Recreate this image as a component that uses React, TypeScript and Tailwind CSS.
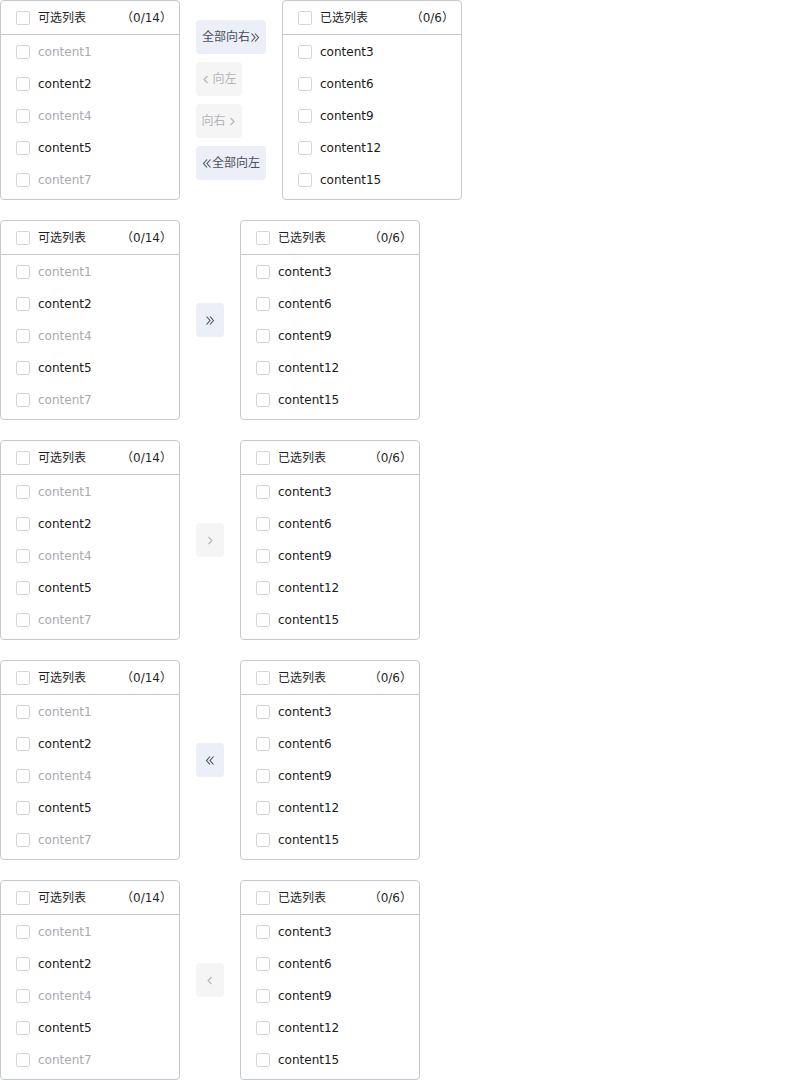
const font = { fontFamily: '"DejaVu Sans", "Noto Sans CJK SC", sans-serif' };

const leftItems = [
  { label: 'content1', disabled: true },
  { label: 'content2', disabled: false },
  { label: 'content4', disabled: true },
  { label: 'content5', disabled: false },
  { label: 'content7', disabled: true },
];

const rightItems = ['content3', 'content6', 'content9', 'content12', 'content15'];

function Box() {
  return <span className="w-[14px] h-[14px] shrink-0 rounded-[2px] border border-[#d4d6db] bg-white" />;
}

function Chevron({ dir, double }: { dir: 'left' | 'right'; double?: boolean }) {
  const flip = dir === 'left' ? 'scale(-1,1) translate(-10,0)' : undefined;
  return (
    <svg width="10" height="11" viewBox="0 0 10 11" fill="none" stroke="currentColor" strokeWidth="1.1">
      <g transform={flip}>
        {double ? (
          <>
            <path d="M1.5 1.5 L5 5.5 L1.5 9.5" />
            <path d="M5 1.5 L8.5 5.5 L5 9.5" />
          </>
        ) : (
          <path d="M3.5 2 L7 5.5 L3.5 9" />
        )}
      </g>
    </svg>
  );
}

function Panel({ title, count, children }: { title: string; count: string; children: React.ReactNode }) {
  return (
    <div className="w-[180px] h-[200px] shrink-0 rounded-[4px] border border-[#c6c8cd] bg-white overflow-hidden">
      <div className="h-[34px] flex items-center pl-[15px] pr-[7px] border-b border-[#c6c8cd] text-[12px] text-[#1f1f1f]">
        <Box />
        <span className="ml-2">{title}</span>
        <span className="ml-auto">{count}</span>
      </div>
      <div className="pt-px">{children}</div>
    </div>
  );
}

function Row({ label, disabled }: { label: string; disabled?: boolean }) {
  return (
    <div className="h-8 flex items-center px-[15px] text-[12px]">
      <Box />
      <span className={disabled ? 'ml-2 text-[#a9abb0]' : 'ml-2 text-[#1a1a1a]'}>{label}</span>
    </div>
  );
}

function LeftPanel() {
  return (
    <Panel title="可选列表" count="（0/14）">
      {leftItems.map((it) => (
        <Row key={it.label} label={it.label} disabled={it.disabled} />
      ))}
    </Panel>
  );
}

function RightPanel() {
  return (
    <Panel title="已选列表" count="（0/6）">
      {rightItems.map((l) => (
        <Row key={l} label={l} />
      ))}
    </Panel>
  );
}

const activeBtn = 'bg-[#eceff7] text-[#4a4f5c]';
const idleBtn = 'bg-[#f5f5f6] text-[#b3b5ba]';

export default function App() {
  return (
    <div className="w-[800px] min-h-[1080px] bg-white flex flex-col gap-5" style={font}>
      <div className="flex items-center">
        <LeftPanel />
        <div className="mx-4 w-[70px] flex flex-col gap-2">
          <button className={`h-[34px] w-[70px] rounded-[4px] flex items-center justify-center text-[12px] ${activeBtn}`}>
            全部向右
            <Chevron dir="right" double />
          </button>
          <button className={`h-[34px] w-[46px] rounded-[4px] flex items-center justify-center gap-[1px] text-[12px] ${idleBtn}`}>
            <Chevron dir="left" />
            向左
          </button>
          <button className={`h-[34px] w-[46px] rounded-[4px] flex items-center justify-center gap-[1px] text-[12px] ${idleBtn}`}>
            向右
            <Chevron dir="right" />
          </button>
          <button className={`h-[34px] w-[70px] rounded-[4px] flex items-center justify-center text-[12px] ${activeBtn}`}>
            <Chevron dir="left" double />
            全部向左
          </button>
        </div>
        <RightPanel />
      </div>

      {[
        { dir: 'right' as const, double: true },
        { dir: 'right' as const, double: false },
        { dir: 'left' as const, double: true },
        { dir: 'left' as const, double: false },
      ].map((b, i) => (
        <div key={i} className="flex items-center">
          <LeftPanel />
          <div className="mx-4">
            <button
              className={`h-[34px] w-[28px] rounded-[4px] flex items-center justify-center ${b.double ? activeBtn : idleBtn}`}
            >
              <Chevron dir={b.dir} double={b.double} />
            </button>
          </div>
          <RightPanel />
        </div>
      ))}
    </div>
  );
}
